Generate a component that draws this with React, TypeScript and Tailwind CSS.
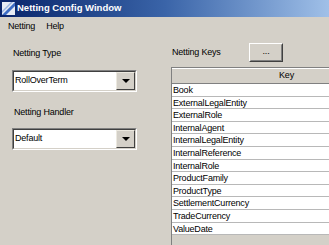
import { FC } from "react";

const keys = [
    "Book",
    "ExternalLegalEntity",
    "ExternalRole",
    "InternalAgent",
    "InternalLegalEntity",
    "InternalReference",
    "InternalRole",
    "ProductFamily",
    "ProductType",
    "SettlementCurrency",
    "TradeCurrency",
    "ValueDate",
];

const ComboBox: FC<{ value: string }> = ({ value }) => {
    return (
        <div className="h-[22px] w-[125px] border border-t-[#808080] border-l-[#808080] border-b-white border-r-white">
            <div className="h-full flex bg-white border border-t-[#404040] border-l-[#404040] border-b-[#d4d0c8] border-r-[#d4d0c8]">
                <div className="flex-1 flex items-center pl-[1px]">{value}</div>
                <div className="w-[19px] h-full bg-[#d4d0c8] border border-t-[#ece9e0] border-l-[#ece9e0] border-b-[#404040] border-r-[#404040] flex items-center justify-center">
                    <div className="w-0 h-0 border-l-[4px] border-r-[4px] border-t-[4px] border-l-transparent border-r-transparent border-t-black" />
                </div>
            </div>
        </div>
    );
};

export default function App() {
    return (
        <div
            className="w-[329px] h-[245px] overflow-hidden bg-[#d4d0c8] text-black flex flex-col text-[9px] tracking-[-0.2px]"
            style={{ fontFamily: '"Liberation Sans", Arial, sans-serif' }}
        >
            {/* title bar */}
            <div className="h-[17px] flex items-center bg-gradient-to-r from-[#0a246a] via-[#3a64a8] to-[#a0c0e8]">
                <svg width="13" height="13" viewBox="0 0 13 13" className="ml-[2px]">
                    <rect x="0" y="0" width="13" height="13" fill="#e8ecf4" />
                    <path d="M0 13 L13 0 L13 4 L4 13 Z" fill="#3c6cc4" />
                    <path d="M0 9 L9 0 L11 0 L0 11 Z" fill="#9ab4e0" />
                </svg>
                <span className="ml-[2px] text-white font-bold text-[9.5px] tracking-normal">
                    Netting Config Window
                </span>
            </div>

            {/* menu */}
            <div className="h-[19px] flex items-center gap-[11px] pl-[8px]">
                <span>Netting</span>
                <span>Help</span>
            </div>

            <div className="flex-1 flex pl-[12px]">
                <div className="w-[125px] flex flex-col pt-[11px]">
                    <div className="h-[12px] leading-[12px] pl-[1px]">Netting Type</div>
                    <div className="mt-[11px]">
                        <ComboBox value="RollOverTerm" />
                    </div>
                    <div className="mt-[14px] h-[12px] leading-[12px] pl-[2px]">Netting Handler</div>
                    <div className="mt-[10px]">
                        <ComboBox value="Default" />
                    </div>
                </div>

                <div className="ml-[34px] flex-1 flex flex-col">
                    <div className="mt-[7px] h-[19px] flex items-center">
                        <div className="w-[78px] pl-[1px]">Netting Keys</div>
                        <div className="w-[34px] h-[19px] border border-t-white border-l-white border-b-[#404040] border-r-[#404040]">
                            <div className="h-full flex items-center justify-center border border-t-[#d4d0c8] border-l-[#d4d0c8] border-b-[#808080] border-r-[#808080] leading-none pb-[3px]">
                                ...
                            </div>
                        </div>
                    </div>

                    <div className="mt-[5px] flex-1 w-[230px] border-l border-t border-[#808080] flex flex-col">
                        <div className="h-[16px] flex items-center justify-center border-b border-[#808080] border-t border-t-white">
                            Key
                        </div>
                        {keys.map((k) => (
                            <div
                                key={k}
                                className="h-[12.6px] leading-[12px] bg-white border-b border-[#b8b8b8] pl-[1px] whitespace-nowrap"
                            >
                                {k}
                            </div>
                        ))}
                    </div>
                </div>
            </div>
        </div>
    );
}
